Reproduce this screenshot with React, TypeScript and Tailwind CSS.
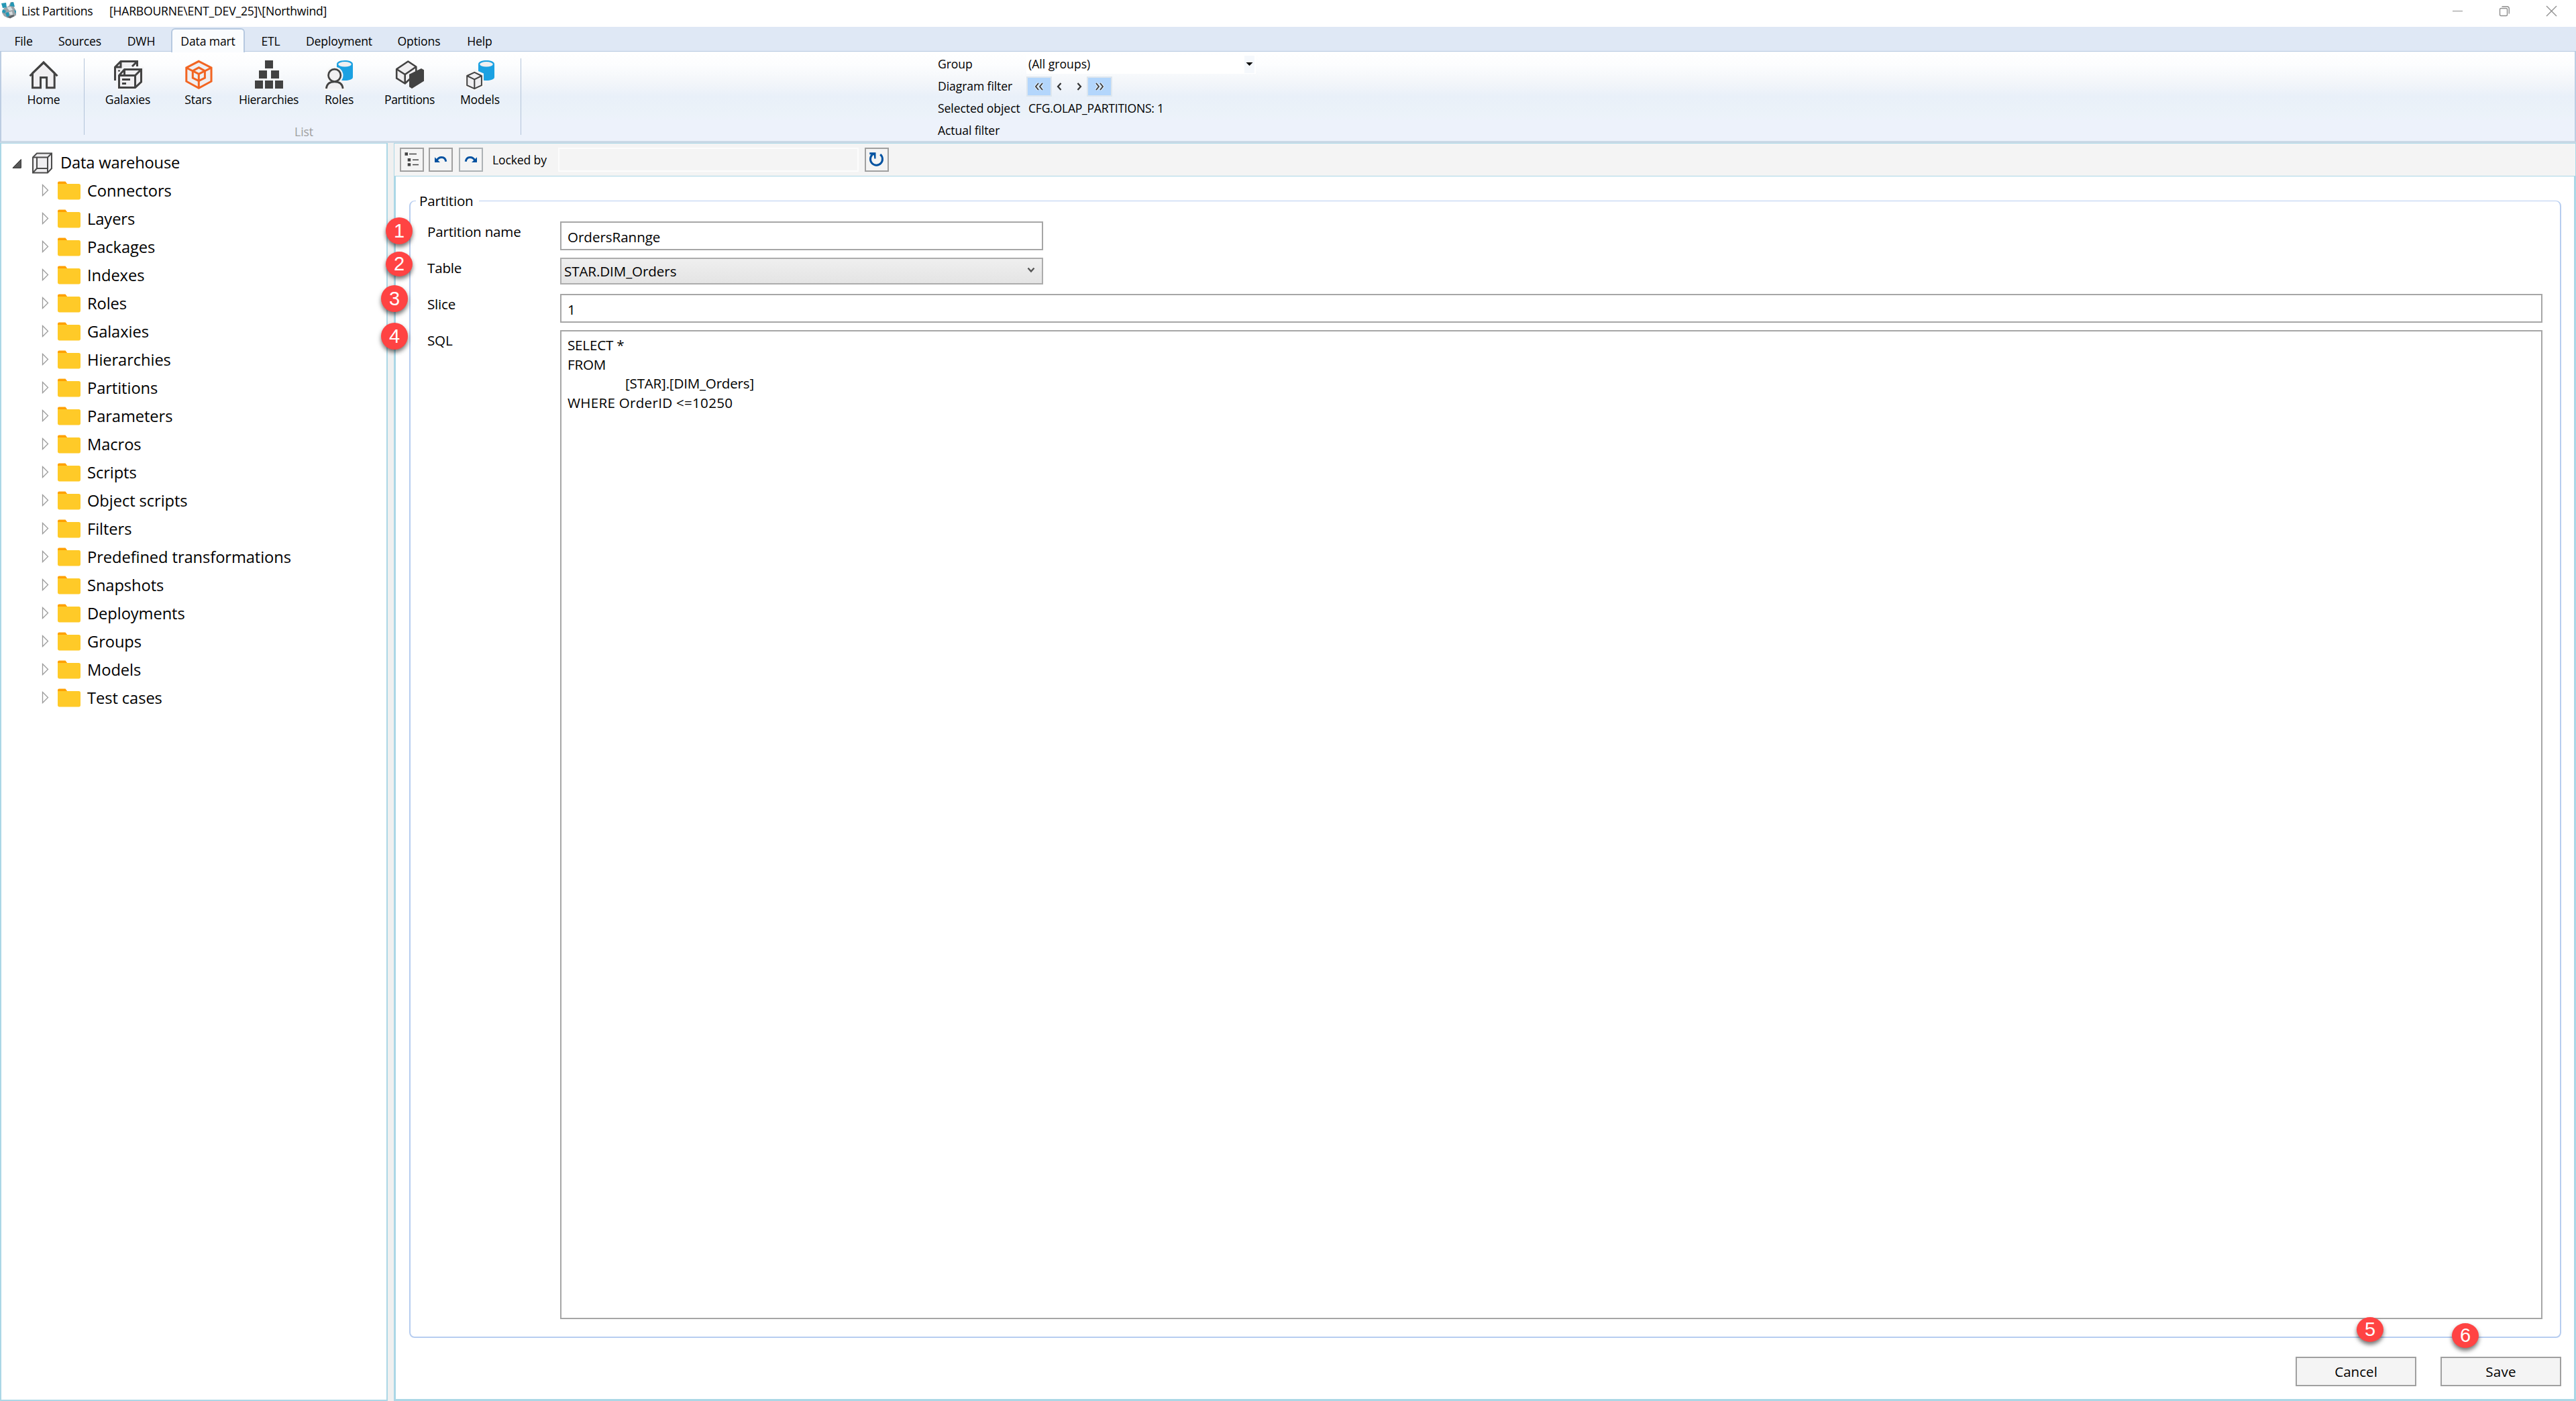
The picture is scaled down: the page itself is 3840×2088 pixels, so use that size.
import React from 'react';
import clsx from 'clsx';

type MenuItem = { label: string; className: string; active?: boolean };

const menuItems: MenuItem[] = [
  { label: 'File', className: 'w-[66px]' },
  { label: 'Sources', className: 'w-[102px]' },
  { label: 'DWH', className: 'w-[81px] mr-1' },
  { label: 'Data mart', className: 'w-[110px]', active: true },
  { label: 'ETL', className: 'w-[77px]' },
  { label: 'Deployment', className: 'w-[127px]' },
  { label: 'Options', className: 'w-[111px]' },
  { label: 'Help', className: 'w-[70px]' },
];

const treeItems = [
  'Connectors',
  'Layers',
  'Packages',
  'Indexes',
  'Roles',
  'Galaxies',
  'Hierarchies',
  'Partitions',
  'Parameters',
  'Macros',
  'Scripts',
  'Object scripts',
  'Filters',
  'Predefined transformations',
  'Snapshots',
  'Deployments',
  'Groups',
  'Models',
  'Test cases',
];

const HomeIcon = () => (
  <g fill="#f0eff1" stroke="#424242" strokeWidth="3">
    <path d="M7.5 22V43.8H19.5V28.5H28.6V43.8H40.2V22L24 6.5Z" />
    <path d="M3.5 26.2 24 5.8 44.5 26.2" fill="none" />
  </g>
);

const GalaxiesIcon = () => (
  <g fill="#f0eff1" stroke="#424242" strokeWidth="3">
    <path d="M4.5 33V13L13 4.5H37.5V11.5L30 13" stroke="none" />
    <path d="M4.5 33V13L13 4.5H37.5V12M13 4.5V13H4.5M37 5 30 12" fill="none" />
    <path d="M10.5 25.5 18.5 16.5H43.5V35L34.5 43.5H10.5Z" stroke="#f4f5f7" strokeWidth="7" />
    <path d="M9 18.5h3" strokeWidth="2" />
    <path d="M10.5 25.5 18.5 16.5H43.5V35L34.5 43.5H10.5Z" />
    <path d="M10.5 25.5H34.5V43.5M34.5 25.5 43.5 16.5M18.5 16.5V25M15 31.5H27M15 37.5H21" fill="none" />
  </g>
);

const StarsIcon = () => (
  <g fill="#f0eff1" stroke="#f26522" strokeWidth="3">
    <path d="M24.3 4.3 43 14V34.2L24.3 44.2 5.8 34.2V14Z" />
    <path d="M5.8 14 24.3 23.4 43 14M24.3 23.4V44" fill="none" />
    <path d="M24.3 13.6 33.4 18.6V29L24.3 33.6 15.3 29V18.6Z" />
    <path d="M15.3 18.6 24.3 23.4 33.4 18.6M24.3 23.4V33.6" fill="none" />
  </g>
);

const HierarchiesIcon = () => (
  <path
    d="M18 3h12v12H18zM9 18h12v12H9zM27 18h12v12H27zM3 33h12v12H3zM18 33h12v12H18zM33 33h12v12H33z"
    fill="#424242"
  />
);

const Cylinder = ({ x }: { x: number }) => (
  <>
    <path d={`M${x} 8.5C${x} 1.2 ${x + 24} 1.2 ${x + 24} 8.5V28C${x + 24} 34.7 ${x} 34.7 ${x} 28Z`} fill="#1ba1e2" />
    <ellipse cx={x + 12} cy="8.8" rx="9.8" ry="3.7" fill="#f0eff1" />
  </>
);

const RolesIcon = () => (
  <>
    <Cylinder x={20} />
    <circle cx="16.7" cy="25.3" r="12.8" fill="#f6f6f6" />
    <path d="M1 47C2 38 9 33 16.7 33S32 38 33 47Z" fill="#f6f6f6" />
    <g fill="#f0eff1" stroke="#424242" strokeWidth="2.7">
      <path d="M4.3 45C5 38 10 34.8 16.7 34.8S28.5 38 29.2 45" />
      <circle cx="16.7" cy="25.3" r="9.2" />
    </g>
  </>
);

const PartitionsIcon = () => (
  <>
    <g fill="#f0eff1" stroke="#424242" strokeWidth="2.6" strokeLinejoin="round">
      <path d="M21.3 4.5 33.3 12.5V22L16.7 37.5 4.2 29.7V16Z" />
      <path d="M4.2 16 16.7 24 33.3 12.5M16.7 24V37.5" fill="none" />
    </g>
    <path d="M23 23.7 41 14.9 45 17.3V33.7L27 45 23 42.3Z" fill="#424242" />
  </>
);

const ModelsIcon = () => (
  <>
    <Cylinder x={21} />
    <path d="M15.3 16.5 29 22.5V42L15.3 48 1 42V24Z" fill="#f6f6f6" />
    <g fill="#f0eff1" stroke="#424242" strokeWidth="2" strokeLinejoin="round">
      <path d="M15.3 20.8 25.9 26V40.2L15.3 45.2 4.2 40.2V26Z" />
      <path d="M4.2 26 15.3 31.3 25.9 26M15.3 31.3V45" fill="none" />
    </g>
  </>
);

const ribbonItems = [
  { label: 'Galaxies', icon: <GalaxiesIcon />, tracking: 'tracking-[-0.15px]' },
  { label: 'Stars', icon: <StarsIcon />, tracking: 'tracking-[-0.2px]' },
  { label: 'Hierarchies', icon: <HierarchiesIcon />, tracking: 'tracking-[-0.38px]' },
  { label: 'Roles', icon: <RolesIcon />, tracking: 'tracking-[-0.2px]' },
  { label: 'Partitions', icon: <PartitionsIcon />, tracking: 'tracking-[-0.36px]' },
  { label: 'Models', icon: <ModelsIcon />, tracking: 'tracking-[-0.12px]' },
];

const RibbonButton = ({ label, icon, className }: { label: string; icon: React.ReactNode; className?: string }) => (
  <div className={clsx('flex flex-col items-center pt-[10px]', className)}>
    <svg viewBox="0 0 48 48" className="size-12 shrink-0 drop-shadow-[0_0_1px_#f6f6f6]">
      {icon}
    </svg>
    <span className="mt-px h-6 leading-6">{label}</span>
  </div>
);

const TitleBar = () => (
  <div className="flex h-10 items-start justify-between bg-white">
    <div className="flex h-8 items-center">
      <svg viewBox="0 0 24 26" className="ml-[1px] mt-[-2px] h-[26px] w-6">
        <path d="M12 7 15 1 19 1 20 9 23 14V21L17 23 11 25 5 22 2 17 5 10Z" fill="#9aa3a8" />
        <path d="M15 2 19 1 21 8 14 7ZM1 3 8 2 9 9 3 10ZM3 12 8 14 6 18 2 16ZM7 17 12 16 13 22 9 23ZM20 12 23 15 22 19Z" fill="#2497b5" />
        <path d="M9 9 15 8 18 13 13 14ZM12 16 17 15 18 20 14 20Z" fill="#d9dde0" />
        <path d="M10 23 19 20 21 22 14 25.5Z" fill="#5e6468" />
      </svg>
      <span className="ml-[7px] w-[131px] tracking-[-0.36px]">List Partitions</span>
      <span className="tracking-[-0.22px]">[HARBOURNE\ENT_DEV_25]\[Northwind]</span>
    </div>
    <div className="flex gap-[53px] pr-7 pt-2 text-[#8f8f8f]">
      <svg viewBox="0 0 17 17" className="size-[17px]" stroke="currentColor">
        <path d="M1 8.5H16" />
      </svg>
      <svg viewBox="0 0 17 17" className="size-[17px]" fill="none" stroke="currentColor" strokeWidth="1.4">
        <rect x="1.5" y="4.5" width="11" height="11" rx="1.5" />
        <path d="M4.5 1.7H12Q15.3 1.7 15.3 5V12.5" />
      </svg>
      <svg viewBox="0 0 17 17" className="size-[17px]" stroke="currentColor" strokeWidth="1.4">
        <path d="M1 1 16 16M16 1 1 16" />
      </svg>
    </div>
  </div>
);

const MenuBar = () => (
  <div className="flex h-[37px] border-b border-[#b6c9e0] bg-[#dfe8f5] pl-0.5 pt-0.5">
    {menuItems.map((item) => (
      <div
        key={item.label}
        className={clsx(
          'flex items-center justify-center tracking-[-0.15px]',
          item.className,
          item.active
            ? 'z-10 -mb-px h-9 rounded-t-md border-2 border-b-0 border-[#b6c9e0] bg-[#fafcfe]'
            : 'h-[34px] pt-1',
        )}
      >
        {item.label}
      </div>
    ))}
  </div>
);

const FilterInfo = () => (
  <div className="ml-[621px] grid auto-rows-[33px] grid-cols-[132px_342px] content-start items-center pt-0.5">
    <span>Group</span>
    <div className="flex h-7 items-center justify-between bg-white pl-[3px] pr-0.5">
      <span className="tracking-normal">(All groups)</span>
      <svg viewBox="0 0 15 26" className="h-[26px] w-[15px] bg-[#f5f8fc]">
        <path d="M2.5 10H12.5L7.5 15Z" fill="#000" />
      </svg>
    </div>

    <span>Diagram filter</span>
    <div className="flex items-center">
      <div className="flex h-[30px] w-[38px] items-center justify-center border-2 border-[#dde6ee] bg-[#b3d6fc]">
        <svg viewBox="0 0 14 12" className="h-3 w-3.5" fill="none" stroke="#e6f1fd" strokeWidth="4">
          <path d="M6 1 2 6 6 11M12 1 8 6 12 11" />
          <path d="M6 1 2 6 6 11M12 1 8 6 12 11" stroke="#3c3c3c" strokeWidth="1.9" />
        </svg>
      </div>
      <svg viewBox="0 0 8 12" className="ml-[7px] h-3 w-2" fill="none" stroke="#333" strokeWidth="2.2">
        <path d="M6.5 1 2 6 6.5 11" />
      </svg>
      <svg viewBox="0 0 8 12" className="ml-[22px] h-3 w-2" fill="none" stroke="#333" strokeWidth="2.2">
        <path d="M1.5 1 6 6 1.5 11" />
      </svg>
      <div className="ml-[7px] flex h-[30px] w-[38px] items-center justify-center border-2 border-[#dde6ee] bg-[#b3d6fc]">
        <svg viewBox="0 0 14 12" className="h-3 w-3.5" fill="none" stroke="#e6f1fd" strokeWidth="4">
          <path d="M2 1 6 6 2 11M8 1 12 6 8 11" />
          <path d="M2 1 6 6 2 11M8 1 12 6 8 11" stroke="#3c3c3c" strokeWidth="1.9" />
        </svg>
      </div>
    </div>

    <span>Selected object</span>
    <span className="pl-[3px] tracking-[-0.26px]">CFG.OLAP_PARTITIONS: 1</span>

    <span>Actual filter</span>
  </div>
);

const Ribbon = () => (
  <div className="flex h-[136px] border-x-2 border-b-[3px] border-x-[#bccde2] border-b-[#cbd9e6] bg-[linear-gradient(#ffffff_0%,#fcfdfe_15%,#f3f6fa_34%,#e9f0f9_50%,#ebf2f9_70%,#edf2fb_78%)] tracking-[-0.1px]">
    <RibbonButton label="Home" icon={<HomeIcon />} className="w-[123px] pl-[3px] tracking-[-0.2px]" />
    <div className="mt-[10px] h-[114px] w-px bg-[#b3c4da]" />
    <div className="flex w-[650px] flex-col">
      <div className="flex h-[107px] pl-3">
        {ribbonItems.map((item) => (
          <RibbonButton key={item.label} label={item.label} icon={item.icon} className={clsx('w-[105px]', item.tracking)} />
        ))}
      </div>
      <span className="pl-1 text-center leading-6 text-[#a0a0a0]">List</span>
    </div>
    <div className="mt-[10px] h-[114px] w-px bg-[#b3c4da]" />
    <FilterInfo />
  </div>
);

const TreePanel = () => (
  <div className="w-[578px] border-2 border-t border-[#abd7e6] bg-white pt-2 text-[23.7px] tracking-[-0.08px]">
    <div className="flex h-[42px] items-center">
      <svg viewBox="0 0 14 15" className="ml-4 h-[15px] w-3.5">
        <path d="M1 14.3H13.3V1.5Z" fill="#595959" stroke="#262626" />
      </svg>
      <svg viewBox="0 0 32 32" className="ml-[15px] size-8" fill="#f0eff1" stroke="#4a4a4a" strokeWidth="2">
        <path d="M2 7.5 8 1.5H30V24L24 30.5H2Z" />
        <path d="M2 7.5H24V30.5M24 7.5 30 1.5" fill="none" />
        <path d="M8 7.5V24H24M8 24 2 30.5" fill="none" />
      </svg>
      <span className="ml-[11px] tracking-[-0.16px]">Data warehouse</span>
    </div>
    {treeItems.map((item) => (
      <div key={item} className="flex h-[42px] items-center">
        <svg viewBox="0 0 11 19" className="mb-1 ml-[60px] h-[19px] w-[11px]" fill="#fff" stroke="#9a9a9a" strokeWidth="1.3">
          <path d="M1.5 1.5V17.5L9.5 9.5Z" />
        </svg>
        <svg viewBox="0 0 34 28" className="mb-0.5 ml-[13px] h-7 w-[34px]">
          <path d="M0 2.5Q0 .5 2 .5H11.5L14.5 4.5V12H0Z" fill="#ffa000" />
          <path d="M0 4H31.5Q34 4 34 6.5V24.5Q34 27.5 31.5 27.5H2.5Q0 27.5 0 24.5Z" fill="#ffca28" />
        </svg>
        <span className="ml-2.5 whitespace-nowrap">{item}</span>
      </div>
    ))}
  </div>
);

const ToolButton = ({ children, className }: { children: React.ReactNode; className?: string }) => (
  <button className={clsx('size-9 border-2 border-[#a0a0a0] bg-[#f4f4f4]', className)}>
    <svg viewBox="0 0 32 32" className="size-8">
      {children}
    </svg>
  </button>
);

const undoShape = (
  <>
    <path d="M10 17.5C13 11 22.5 10.5 23.8 18.8" fill="none" stroke="#0051a0" strokeWidth="3" />
    <path d="M7 12.2V20H15Z" fill="#0051a0" />
  </>
);

const Toolbar = () => (
  <div className="flex h-[50px] items-start border border-[#abd7e6] bg-[#f4f4f4] pl-2 pt-1.5">
    <ToolButton>
      <path d="M5.5 5.3H10V9.7H5.5ZM9.7 14H14.2V18.4H9.7ZM9.7 21.2H14.2V25.6H9.7Z" fill="#424242" />
      <path d="M12 7.5H23M17 16.3H26M17 23.5H26" stroke="#424242" strokeWidth="1.5" />
    </ToolButton>
    <ToolButton className="ml-[7px]">{undoShape}</ToolButton>
    <ToolButton className="ml-[9px] !border-[#adb2b5]">
      <g transform="matrix(-1 0 0 1 32 0)">{undoShape}</g>
    </ToolButton>
    <span className="ml-[14px] w-[98px] leading-9 tracking-[-0.15px]">Locked by</span>
    <div className="h-9 w-[448px] border-2 border-[#fcfcfc]" />
    <ToolButton className="ml-[9px]">
      <path d="M21.2 8.2A9 9 0 1 1 9.5 8.4" fill="none" stroke="#0051a0" strokeWidth="3" />
      <path d="M5.3 5.3H14.5V14.5H12.3L11.8 9.5 8 8.3H5.3Z" fill="#0051a0" />
    </ToolButton>
  </div>
);

const FieldLabel = ({ children }: { children: React.ReactNode }) => (
  <label className="mt-px w-[198px] shrink-0 leading-7">{children}</label>
);

const PartitionForm = () => (
  <fieldset className="ml-5 mr-[19px] mt-[22px] flex h-[1709px] flex-col rounded-lg border-2 border-t border-[#b7cdf0] text-[20.6px] tracking-[-0.2px]">
    <legend className="ml-2 h-7 px-[5px] pr-2 leading-7">Partition</legend>
    <div className="flex pl-[25px] pt-[17px]">
      <FieldLabel>Partition name</FieldLabel>
      <div className="flex h-[43px] w-[720px] items-center border-2 border-[#a6a6a6] pl-[9px] pt-[3px] tracking-[-0.05px]">OrdersRannge</div>
    </div>
    <div className="flex pl-[25px] pt-[11px]">
      <FieldLabel>Table</FieldLabel>
      <div className="flex h-10 w-[720px] items-center justify-between border-2 border-[#acacac] bg-linear-to-b from-[#efefef] to-[#e4e4e4] pl-1 pr-[10px]">
        <span className="tracking-[-0.1px]">STAR.DIM_Orders</span>
        <svg viewBox="0 0 12 9" className="mb-1 h-[9px] w-3" fill="none" stroke="#555" strokeWidth="2.4">
          <path d="M1.5 1.5 6 6.5 10.5 1.5" />
        </svg>
      </div>
    </div>
    <div className="flex pl-[25px] pt-[14px]">
      <FieldLabel>Slice</FieldLabel>
      <div className="flex h-[43px] w-[2955px] items-center border-2 border-[#a6a6a6] pl-[9px] pt-[3px]">1</div>
    </div>
    <div className="flex pl-[25px] pt-[11px]">
      <FieldLabel>SQL</FieldLabel>
      <pre className="h-[1474px] w-[2955px] border-2 border-[#a6a6a6] pl-[9px] pt-[6px] font-['Open_Sans',sans-serif] leading-[28.67px]">
        <div>SELECT *</div>
        <div>FROM</div>
        <div className="pl-[86px]">[STAR].[DIM_Orders]</div>
        <div className="tracking-[0.27px]">WHERE OrderID &lt;=10250</div>
      </pre>
    </div>
  </fieldset>
);

const Badge = ({ n, className }: { n: number; className: string }) => (
  <div
    className={clsx(
      "absolute flex w-10 items-center justify-center rounded-[50%] bg-[#ff4343] font-['Liberation_Sans',sans-serif] text-[29px] leading-none tracking-normal text-white shadow-[0_4px_6px_rgba(0,0,0,0.55)]",
      className,
    )}
  >
    {n}
  </div>
);

const App = () => {
  return (
    <div className="relative flex h-[2088px] w-[3840px] flex-col overflow-hidden bg-[#f0f0f0] font-['Open_Sans',sans-serif] text-[17.6px] text-black">
      <TitleBar />
      <MenuBar />
      <Ribbon />

      <div className="flex flex-1">
        <TreePanel />
        <div className="ml-[9px] flex flex-1 flex-col">
          <Toolbar />
          <div className="flex flex-1 flex-col border-x-[3px] border-b-[3px] border-[#abd7e6] bg-white">
            <PartitionForm />
            <div className="mr-[19px] mt-[28px] flex justify-end gap-9 text-[20.6px]">
              <button className="h-11 w-[180px] border-2 border-[#a0a0a0] bg-[#f4f4f4]">Cancel</button>
              <button className="h-11 w-[180px] border-2 border-[#a0a0a0] bg-[#f4f4f4] tracking-[0.2px]">Save</button>
            </div>
          </div>
        </div>
      </div>

      {/* Step markers */}
      <Badge n={1} className="left-[575px] top-[324px] h-10" />
      <Badge n={2} className="left-[575px] top-[375px] h-[37px]" />
      <Badge n={3} className="left-[568px] top-[425px] h-10" />
      <Badge n={4} className="left-[568px] top-[481px] h-10" />
      <Badge n={5} className="left-[3513px] top-[1963px] h-[37px]" />
      <Badge n={6} className="left-[3655px] top-[1972px] h-[37px]" />
    </div>
  );
};

export default App;
